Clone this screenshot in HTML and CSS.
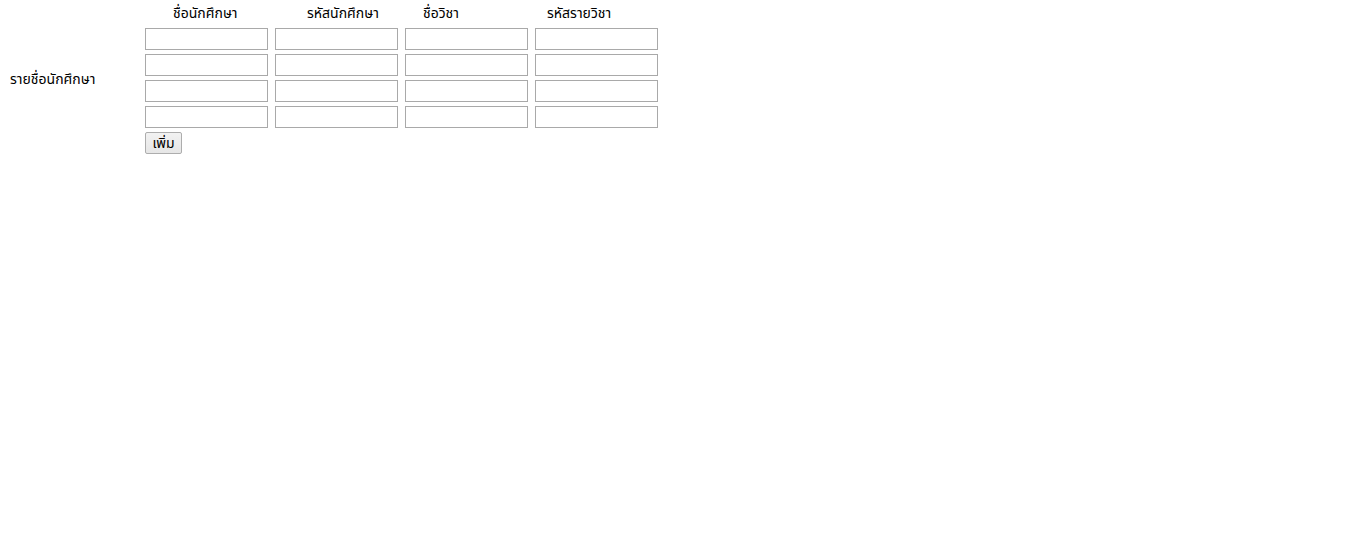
FILE: index.html
```html
<!DOCTYPE html>
<html lang="th">
<head>
  <meta charset="UTF-8">
  <title>รายชื่อนักศึกษา</title>
  <link rel="stylesheet" href="styles.css">
</head>
<body>
  <div class="form-wrap">
    <div class="side-label">รายชื่อนักศึกษา</div>

    <div class="students">
      <div class="heads">
        <span class="head head-name">ชื่อนักศึกษา</span>
        <span class="head head-id">รหัสนักศึกษา</span>
        <span class="head head-subject">ชื่อวิชา</span>
        <span class="head head-code">รหัสรายวิชา</span>
      </div>

      <div class="rows">
        <div class="row">
          <input type="text" name="name[]"><input type="text" name="id[]"><input type="text" name="subject[]"><input type="text" name="code[]">
        </div>
        <div class="row">
          <input type="text" name="name[]"><input type="text" name="id[]"><input type="text" name="subject[]"><input type="text" name="code[]">
        </div>
        <div class="row">
          <input type="text" name="name[]"><input type="text" name="id[]"><input type="text" name="subject[]"><input type="text" name="code[]">
        </div>
        <div class="row">
          <input type="text" name="name[]"><input type="text" name="id[]"><input type="text" name="subject[]"><input type="text" name="code[]">
        </div>
      </div>

      <button type="button" class="add-btn">เพิ่ม</button>
    </div>
  </div>
</body>
</html>
```

FILE: styles.css
```css
body {
  margin: 0;
  font-family: Tahoma, "Noto Sans Thai", "Noto Sans", "DejaVu Sans", sans-serif;
  font-size: 14px;
  color: #000;
  background-color: #fff;
}
.form-wrap {
  display: flex;
  padding: 0 0 0 10px;
}
.side-label {
  width: 135px;
  display: flex;
  align-items: center;
  padding-top: 2px;
  height: 154px;
  white-space: nowrap;
}
.students {
  display: flex;
  flex-direction: column;
}
.heads {
  display: grid;
  grid-template-columns: repeat(4, 123px);
  column-gap: 7px;
  height: 28px;
  line-height: 28px;
  white-space: nowrap;
}
.head-name {
  padding-left: 28px;
}
.head-id {
  padding-left: 32px;
}
.head-subject {
  padding-left: 18px;
}
.head-code {
  padding-left: 12px;
}
.rows {
  display: flex;
  flex-direction: column;
  gap: 4px;
}
.row {
  display: flex;
  gap: 7px;
}
input[type="text"] {
  width: 123px;
  height: 22px;
  box-sizing: border-box;
  margin: 0;
  padding: 1px 2px;
  border: 1px solid #a9a9a9;
  font-family: inherit;
  font-size: 13px;
}
.add-btn {
  align-self: flex-start;
  margin-top: 4px;
  width: 37px;
  height: 22px;
  padding: 0;
  border: 1px solid #adadad;
  border-radius: 2px;
  background: linear-gradient(#f2f2f2, #e6e6e6);
  font-family: inherit;
  font-size: 14px;
  color: #000;
}
```
